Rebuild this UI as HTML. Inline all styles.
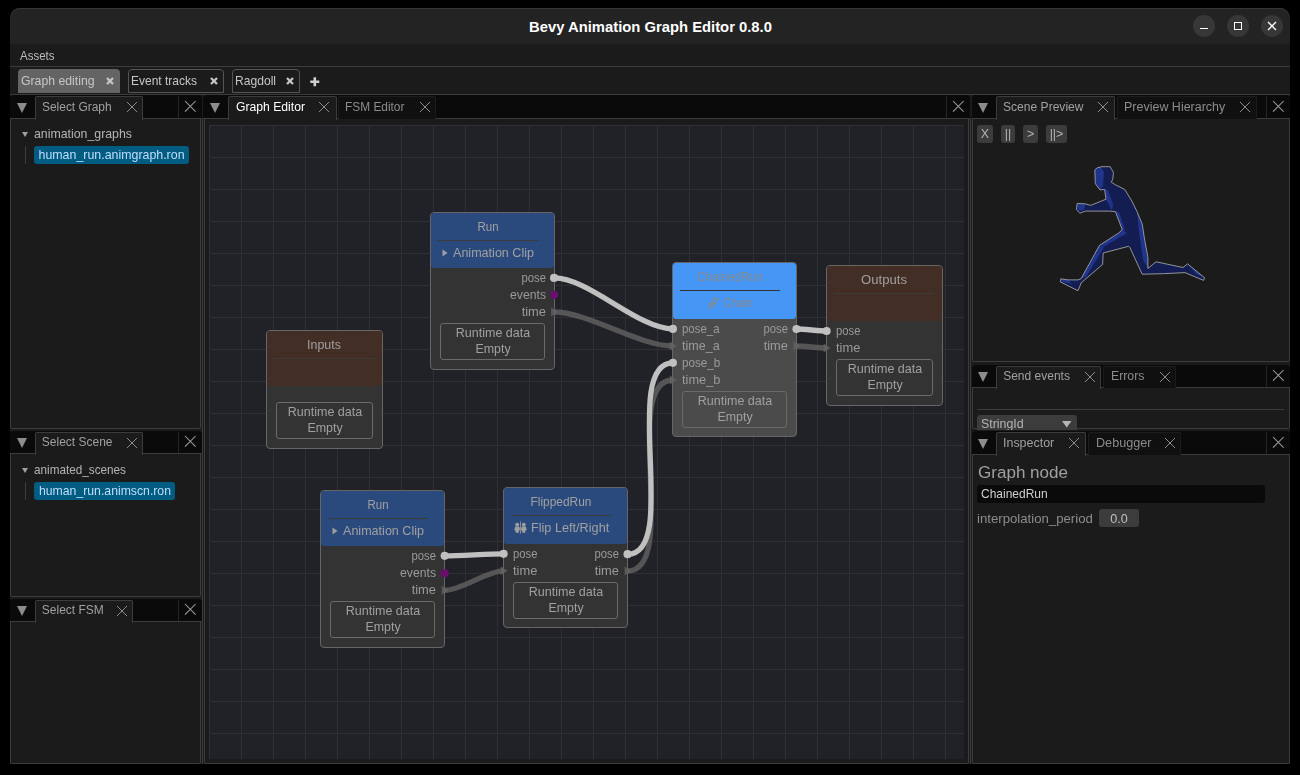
<!DOCTYPE html><html><head><meta charset="utf-8"><style>
html,body{margin:0;padding:0;width:1300px;height:775px;overflow:hidden;background:#000;}
.a{position:absolute;}
.t{position:absolute;font-family:"Liberation Sans", sans-serif;white-space:nowrap;}
svg{overflow:visible}
</style></head><body>
<div style="position:absolute;left:10px;top:8px;width:1280px;height:756px;background:#1b1b1b;border-radius:10px 10px 0 0;"></div>
<div style="position:absolute;left:10px;top:8px;width:1280px;height:36px;background:#232323;border-radius:10px 10px 0 0;box-shadow:inset 0 1px 0 #353535;"></div>

<div class="t" style="left:650.50px;top:20.07px;font-size:14.8px;line-height:14.8px;color:#ffffff;font-weight:bold;transform:translateX(-50%);">Bevy Animation Graph Editor 0.8.0</div>
<div id="root" style="position:absolute;left:0;top:0;width:1300px;height:775px;will-change:transform">
<div class="a" style="left:1193px;top:15px;width:22px;height:22px;border-radius:11px;background:#373737"></div>
<div class="a" style="left:1227px;top:15px;width:22px;height:22px;border-radius:11px;background:#373737"></div>
<div class="a" style="left:1261px;top:15px;width:22px;height:22px;border-radius:11px;background:#373737"></div>
<div class="a" style="left:1200px;top:27.8px;width:8px;height:1.1999999999999993px;background:#ffffff;"></div>
<div class="a" style="left:1234px;top:22px;width:6px;height:6px;border:1.2px solid #fff"></div>
<svg class="a" style="left:1267.0px;top:21.0px" width="10" height="10"><path d="M1 1L9 9M9 1L1 9" stroke="#ffffff" stroke-width="1.3"/></svg>
<div class="t" style="left:20.30px;top:49.50px;font-size:12.4px;line-height:12.4px;color:#bdbdbd;transform-origin:0 0;transform: scaleX(0.9273);">Assets</div>
<div class="a" style="left:10px;top:66px;width:1280px;height:1px;background:#3c3c3c;"></div>
<div class="a" style="left:18px;top:69px;width:102px;height:24px;background:#646464;border-radius:4px 4px 0 0"></div>
<div class="t" style="left:20.80px;top:75.00px;font-size:12.4px;line-height:12.4px;color:#c6c6c6;transform-origin:0 0;transform: scaleX(0.9882);">Graph editing</div>
<svg class="a" style="left:106.3px;top:77.4px" width="8" height="8"><path d="M1 1L7 7M7 1L1 7" stroke="#c6c6c6" stroke-width="2.3"/></svg>
<div class="a" style="left:128px;top:69px;width:94px;height:22px;background:#1b1b1b;border:1px solid #555555;border-radius:4px 4px 0 0"></div>
<div class="t" style="left:130.80px;top:75.00px;font-size:12.4px;line-height:12.4px;color:#c6c6c6;transform-origin:0 0;transform: scaleX(0.9679);">Event tracks</div>
<svg class="a" style="left:210.3px;top:77.4px" width="8" height="8"><path d="M1 1L7 7M7 1L1 7" stroke="#c6c6c6" stroke-width="2.3"/></svg>
<div class="a" style="left:232px;top:69px;width:66px;height:22px;background:#1b1b1b;border:1px solid #555555;border-radius:4px 4px 0 0"></div>
<div class="t" style="left:234.80px;top:75.00px;font-size:12.4px;line-height:12.4px;color:#c6c6c6;transform-origin:0 0;transform: scaleX(0.9758);">Ragdoll</div>
<svg class="a" style="left:286.3px;top:77.4px" width="8" height="8"><path d="M1 1L7 7M7 1L1 7" stroke="#c6c6c6" stroke-width="2.3"/></svg>
<svg class="a" style="left:309.7px;top:76.6px" width="10" height="10"><path d="M4.8 0.3V9.3M0.3 4.8H9.3" stroke="#d0d0d0" stroke-width="2.6"/></svg>
<div class="a" style="left:10px;top:94px;width:1280px;height:1px;background:#3c3c3c;"></div>
<div class="a" style="left:10px;top:95px;width:192px;height:24px;background:#0a0a0a;border-radius:4px 4px 0 0"></div>
<div class="a" style="left:10px;top:118px;width:192px;height:1px;background:#3c3c3c;"></div>
<svg class="a" style="left:17.0px;top:102.5px" width="10" height="10"><path d="M0 0L10 0L5.0 10Z" fill="#8c8c8c"/></svg>
<div class="a" style="left:35px;top:96px;width:106px;height:23px;background:#1b1b1b;border:1px solid #3c3c3c;border-bottom:none;border-radius:2px 2px 0 0"></div>
<div class="t" style="left:41.80px;top:100.64px;font-size:12px;line-height:12px;color:#a0a0a0;transform-origin:0 0;transform: scaleX(0.9941);">Select Graph</div>
<svg class="a" style="left:126.0px;top:101.0px" width="12" height="12"><path d="M1 1L11 11M11 1L1 11" stroke="#8c8c8c" stroke-width="1"/></svg>
<div class="a" style="left:178px;top:96px;width:1px;height:22px;background:#262626;"></div>
<svg class="a" style="left:183.7px;top:99.7px" width="12.6" height="12.6"><path d="M1 1L11.6 11.6M11.6 1L1 11.6" stroke="#a0a0a0" stroke-width="1.05"/></svg>
<div class="a" style="left:10px;top:119px;width:189px;height:309px;border:1px solid #3c3c3c;border-top:none;border-radius:0 0 2px 2px"></div>
<div class="a" style="left:10px;top:431px;width:192px;height:23px;background:#0a0a0a;border-radius:4px 4px 0 0"></div>
<div class="a" style="left:10px;top:453px;width:192px;height:1px;background:#3c3c3c;"></div>
<svg class="a" style="left:17.0px;top:438.0px" width="10" height="10"><path d="M0 0L10 0L5.0 10Z" fill="#8c8c8c"/></svg>
<div class="a" style="left:35px;top:432px;width:106px;height:22px;background:#1b1b1b;border:1px solid #3c3c3c;border-bottom:none;border-radius:2px 2px 0 0"></div>
<div class="t" style="left:41.80px;top:436.14px;font-size:12px;line-height:12px;color:#a0a0a0;">Select Scene</div>
<svg class="a" style="left:125.69999999999999px;top:436.5px" width="12" height="12"><path d="M1 1L11 11M11 1L1 11" stroke="#8c8c8c" stroke-width="1"/></svg>
<div class="a" style="left:178px;top:432px;width:1px;height:21px;background:#262626;"></div>
<svg class="a" style="left:183.7px;top:435.2px" width="12.6" height="12.6"><path d="M1 1L11.6 11.6M11.6 1L1 11.6" stroke="#a0a0a0" stroke-width="1.05"/></svg>
<div class="a" style="left:10px;top:454px;width:189px;height:142px;border:1px solid #3c3c3c;border-top:none;border-radius:0 0 2px 2px"></div>
<div class="a" style="left:10px;top:599px;width:192px;height:23px;background:#0a0a0a;border-radius:4px 4px 0 0"></div>
<div class="a" style="left:10px;top:621px;width:192px;height:1px;background:#3c3c3c;"></div>
<svg class="a" style="left:17.0px;top:606.0px" width="10" height="10"><path d="M0 0L10 0L5.0 10Z" fill="#8c8c8c"/></svg>
<div class="a" style="left:35px;top:600px;width:96px;height:22px;background:#1b1b1b;border:1px solid #3c3c3c;border-bottom:none;border-radius:2px 2px 0 0"></div>
<div class="t" style="left:41.80px;top:604.14px;font-size:12px;line-height:12px;color:#a0a0a0;">Select FSM</div>
<svg class="a" style="left:115.5px;top:604.5px" width="12" height="12"><path d="M1 1L11 11M11 1L1 11" stroke="#8c8c8c" stroke-width="1"/></svg>
<div class="a" style="left:178px;top:600px;width:1px;height:21px;background:#262626;"></div>
<svg class="a" style="left:183.7px;top:603.2px" width="12.6" height="12.6"><path d="M1 1L11.6 11.6M11.6 1L1 11.6" stroke="#a0a0a0" stroke-width="1.05"/></svg>
<div class="a" style="left:10px;top:622px;width:189px;height:141px;border:1px solid #3c3c3c;border-top:none;border-radius:0 0 2px 2px"></div>
<div class="a" style="left:202px;top:119px;width:1px;height:645px;background:#3c3c3c;"></div>
<div class="a" style="left:203px;top:95px;width:767px;height:24px;background:#0a0a0a;border-radius:4px 4px 0 0"></div>
<div class="a" style="left:203px;top:118px;width:767px;height:1px;background:#3c3c3c;"></div>
<svg class="a" style="left:210.0px;top:102.5px" width="10" height="10"><path d="M0 0L10 0L5.0 10Z" fill="#8c8c8c"/></svg>
<div class="a" style="left:228px;top:96px;width:107px;height:23px;background:#1b1b1b;border:1px solid #3c3c3c;border-bottom:none;border-radius:2px 2px 0 0"></div>
<div class="t" style="left:235.60px;top:100.64px;font-size:12px;line-height:12px;color:#ffffff;transform-origin:0 0;transform: scaleX(1.0145);">Graph Editor</div>
<svg class="a" style="left:318.4px;top:101.0px" width="12" height="12"><path d="M1 1L11 11M11 1L1 11" stroke="#8c8c8c" stroke-width="1"/></svg>
<div class="a" style="left:338px;top:96px;width:96px;height:22px;background:#101010;border:1px solid #1c1c1c;border-bottom:none;border-radius:2px 2px 0 0"></div>
<div class="t" style="left:345.40px;top:100.64px;font-size:12px;line-height:12px;color:#8c8c8c;transform-origin:0 0;transform: scaleX(0.9900);">FSM Editor</div>
<svg class="a" style="left:418.6px;top:101.0px" width="12" height="12"><path d="M1 1L11 11M11 1L1 11" stroke="#8c8c8c" stroke-width="1"/></svg>
<div class="a" style="left:946px;top:96px;width:1px;height:22px;background:#262626;"></div>
<svg class="a" style="left:951.7px;top:99.7px" width="12.6" height="12.6"><path d="M1 1L11.6 11.6M11.6 1L1 11.6" stroke="#a0a0a0" stroke-width="1.05"/></svg>
<div class="a" style="left:204px;top:119px;width:763px;height:644px;border:1px solid #3c3c3c;border-top:none;border-radius:0 0 2px 2px"></div>
<div class="a" style="left:970px;top:119px;width:1px;height:645px;background:#3c3c3c;"></div>
<div class="a" style="left:972px;top:95px;width:318px;height:24px;background:#0a0a0a;border-radius:4px 4px 0 0"></div>
<div class="a" style="left:972px;top:118px;width:318px;height:1px;background:#3c3c3c;"></div>
<svg class="a" style="left:978.0px;top:102.5px" width="10" height="10"><path d="M0 0L10 0L5.0 10Z" fill="#8c8c8c"/></svg>
<div class="a" style="left:996px;top:96px;width:117px;height:23px;background:#1b1b1b;border:1px solid #3c3c3c;border-bottom:none;border-radius:2px 2px 0 0"></div>
<div class="t" style="left:1003.00px;top:100.64px;font-size:12px;line-height:12px;color:#a0a0a0;transform-origin:0 0;transform: scaleX(1.0059);">Scene Preview</div>
<svg class="a" style="left:1097.2px;top:101.0px" width="12" height="12"><path d="M1 1L11 11M11 1L1 11" stroke="#8c8c8c" stroke-width="1"/></svg>
<div class="a" style="left:1117px;top:96px;width:138px;height:22px;background:#101010;border:1px solid #1c1c1c;border-bottom:none;border-radius:2px 2px 0 0"></div>
<div class="t" style="left:1124.30px;top:100.64px;font-size:12px;line-height:12px;color:#8c8c8c;transform-origin:0 0;transform: scaleX(1.0403);">Preview Hierarchy</div>
<svg class="a" style="left:1239.4px;top:101.0px" width="12" height="12"><path d="M1 1L11 11M11 1L1 11" stroke="#8c8c8c" stroke-width="1"/></svg>
<div class="a" style="left:1266px;top:96px;width:1px;height:22px;background:#262626;"></div>
<svg class="a" style="left:1271.7px;top:99.7px" width="12.6" height="12.6"><path d="M1 1L11.6 11.6M11.6 1L1 11.6" stroke="#a0a0a0" stroke-width="1.05"/></svg>
<div class="a" style="left:972px;top:119px;width:316px;height:242px;border:1px solid #3c3c3c;border-top:none;border-radius:0 0 2px 2px"></div>
<div class="a" style="left:972px;top:365px;width:318px;height:23px;background:#0a0a0a;border-radius:4px 4px 0 0"></div>
<div class="a" style="left:972px;top:387px;width:318px;height:1px;background:#3c3c3c;"></div>
<svg class="a" style="left:978.0px;top:372.0px" width="10" height="10"><path d="M0 0L10 0L5.0 10Z" fill="#8c8c8c"/></svg>
<div class="a" style="left:996px;top:366px;width:103px;height:22px;background:#1b1b1b;border:1px solid #3c3c3c;border-bottom:none;border-radius:2px 2px 0 0"></div>
<div class="t" style="left:1003.20px;top:370.14px;font-size:12px;line-height:12px;color:#a0a0a0;">Send events</div>
<svg class="a" style="left:1084.0px;top:370.5px" width="12" height="12"><path d="M1 1L11 11M11 1L1 11" stroke="#8c8c8c" stroke-width="1"/></svg>
<div class="a" style="left:1103px;top:366px;width:71px;height:21px;background:#101010;border:1px solid #1c1c1c;border-bottom:none;border-radius:2px 2px 0 0"></div>
<div class="t" style="left:1110.50px;top:370.14px;font-size:12px;line-height:12px;color:#8c8c8c;transform-origin:0 0;transform: scaleX(1.0223);">Errors</div>
<svg class="a" style="left:1158.8px;top:370.5px" width="12" height="12"><path d="M1 1L11 11M11 1L1 11" stroke="#8c8c8c" stroke-width="1"/></svg>
<div class="a" style="left:1266px;top:366px;width:1px;height:21px;background:#262626;"></div>
<svg class="a" style="left:1271.7px;top:369.2px" width="12.6" height="12.6"><path d="M1 1L11.6 11.6M11.6 1L1 11.6" stroke="#a0a0a0" stroke-width="1.05"/></svg>
<div class="a" style="left:972px;top:388px;width:316px;height:40px;border:1px solid #3c3c3c;border-top:none;border-radius:0 0 2px 2px"></div>
<div class="a" style="left:972px;top:431px;width:318px;height:24px;background:#0a0a0a;border-radius:4px 4px 0 0"></div>
<div class="a" style="left:972px;top:454px;width:318px;height:1px;background:#3c3c3c;"></div>
<svg class="a" style="left:978.0px;top:438.5px" width="10" height="10"><path d="M0 0L10 0L5.0 10Z" fill="#8c8c8c"/></svg>
<div class="a" style="left:996px;top:432px;width:88px;height:23px;background:#1b1b1b;border:1px solid #3c3c3c;border-bottom:none;border-radius:2px 2px 0 0"></div>
<div class="t" style="left:1003.40px;top:436.64px;font-size:12px;line-height:12px;color:#a0a0a0;transform-origin:0 0;transform: scaleX(1.0376);">Inspector</div>
<svg class="a" style="left:1068.3px;top:437.0px" width="12" height="12"><path d="M1 1L11 11M11 1L1 11" stroke="#8c8c8c" stroke-width="1"/></svg>
<div class="a" style="left:1088px;top:432px;width:91px;height:22px;background:#101010;border:1px solid #1c1c1c;border-bottom:none;border-radius:2px 2px 0 0"></div>
<div class="t" style="left:1095.50px;top:436.64px;font-size:12px;line-height:12px;color:#8c8c8c;transform-origin:0 0;transform: scaleX(1.0512);">Debugger</div>
<svg class="a" style="left:1164.0px;top:437.0px" width="12" height="12"><path d="M1 1L11 11M11 1L1 11" stroke="#8c8c8c" stroke-width="1"/></svg>
<div class="a" style="left:1266px;top:432px;width:1px;height:22px;background:#262626;"></div>
<svg class="a" style="left:1271.7px;top:435.7px" width="12.6" height="12.6"><path d="M1 1L11.6 11.6M11.6 1L1 11.6" stroke="#a0a0a0" stroke-width="1.05"/></svg>
<div class="a" style="left:972px;top:455px;width:316px;height:308px;border:1px solid #3c3c3c;border-top:none;border-radius:0 0 2px 2px"></div>
<svg class="a" style="left:22.0px;top:132.3px" width="6" height="5"><path d="M0 0L6 0L3.0 5Z" fill="#a0a0a0"/></svg>
<div class="t" style="left:34.00px;top:127.80px;font-size:12.4px;line-height:12.4px;color:#b4b4b4;transform-origin:0 0;transform: scaleX(0.9949);">animation_graphs</div>
<div class="a" style="left:25px;top:146.3px;width:1px;height:18.0px;background:#3c3c3c;"></div>
<div class="a" style="left:34px;top:146.3px;width:155px;height:18px;background:#005c80;border-radius:3px"></div>
<div class="t" style="left:38.50px;top:148.80px;font-size:12.4px;line-height:12.4px;color:#c0deff;">human_run.animgraph.ron</div>
<svg class="a" style="left:22.0px;top:468.0px" width="6" height="5"><path d="M0 0L6 0L3.0 5Z" fill="#a0a0a0"/></svg>
<div class="t" style="left:34.00px;top:463.50px;font-size:12.4px;line-height:12.4px;color:#b4b4b4;transform-origin:0 0;transform: scaleX(0.9471);">animated_scenes</div>
<div class="a" style="left:25px;top:482px;width:1px;height:18px;background:#3c3c3c;"></div>
<div class="a" style="left:34px;top:482px;width:141px;height:18px;background:#005c80;border-radius:3px"></div>
<div class="t" style="left:38.50px;top:484.50px;font-size:12.4px;line-height:12.4px;color:#c0deff;transform-origin:0 0;transform: scaleX(0.9878);">human_run.animscn.ron</div>
<svg class="a" style="left:209px;top:125px;background:#212227" width="755" height="634"><rect x="0" y="0" width="1" height="634" fill="#2f3035"/><rect x="32" y="0" width="1" height="634" fill="#2f3035"/><rect x="64" y="0" width="1" height="634" fill="#2f3035"/><rect x="96" y="0" width="1" height="634" fill="#2f3035"/><rect x="128" y="0" width="1" height="634" fill="#2f3035"/><rect x="160" y="0" width="1" height="634" fill="#2f3035"/><rect x="192" y="0" width="1" height="634" fill="#2f3035"/><rect x="224" y="0" width="1" height="634" fill="#2f3035"/><rect x="256" y="0" width="1" height="634" fill="#2f3035"/><rect x="288" y="0" width="1" height="634" fill="#2f3035"/><rect x="320" y="0" width="1" height="634" fill="#2f3035"/><rect x="352" y="0" width="1" height="634" fill="#2f3035"/><rect x="384" y="0" width="1" height="634" fill="#2f3035"/><rect x="416" y="0" width="1" height="634" fill="#2f3035"/><rect x="448" y="0" width="1" height="634" fill="#2f3035"/><rect x="480" y="0" width="1" height="634" fill="#2f3035"/><rect x="512" y="0" width="1" height="634" fill="#2f3035"/><rect x="544" y="0" width="1" height="634" fill="#2f3035"/><rect x="576" y="0" width="1" height="634" fill="#2f3035"/><rect x="608" y="0" width="1" height="634" fill="#2f3035"/><rect x="640" y="0" width="1" height="634" fill="#2f3035"/><rect x="672" y="0" width="1" height="634" fill="#2f3035"/><rect x="704" y="0" width="1" height="634" fill="#2f3035"/><rect x="736" y="0" width="1" height="634" fill="#2f3035"/><rect x="0" y="0" width="755" height="1" fill="#2f3035"/><rect x="0" y="32" width="755" height="1" fill="#2f3035"/><rect x="0" y="64" width="755" height="1" fill="#2f3035"/><rect x="0" y="96" width="755" height="1" fill="#2f3035"/><rect x="0" y="128" width="755" height="1" fill="#2f3035"/><rect x="0" y="160" width="755" height="1" fill="#2f3035"/><rect x="0" y="192" width="755" height="1" fill="#2f3035"/><rect x="0" y="224" width="755" height="1" fill="#2f3035"/><rect x="0" y="256" width="755" height="1" fill="#2f3035"/><rect x="0" y="288" width="755" height="1" fill="#2f3035"/><rect x="0" y="320" width="755" height="1" fill="#2f3035"/><rect x="0" y="352" width="755" height="1" fill="#2f3035"/><rect x="0" y="384" width="755" height="1" fill="#2f3035"/><rect x="0" y="416" width="755" height="1" fill="#2f3035"/><rect x="0" y="448" width="755" height="1" fill="#2f3035"/><rect x="0" y="480" width="755" height="1" fill="#2f3035"/><rect x="0" y="512" width="755" height="1" fill="#2f3035"/><rect x="0" y="544" width="755" height="1" fill="#2f3035"/><rect x="0" y="576" width="755" height="1" fill="#2f3035"/><rect x="0" y="608" width="755" height="1" fill="#2f3035"/></svg>
<div class="a" style="left:430px;top:212px;width:123px;height:156px;background:#333333;border:1px solid #666666;border-radius:4px"></div>
<div class="a" style="left:431px;top:213px;width:123px;height:55px;background:#2a4a7d;border-radius:3px"></div>
<div class="t" style="left:488.40px;top:220.26px;font-size:13.4px;line-height:13.4px;color:#a0a0a0;transform:translateX(-50%) scaleX(0.8585);">Run</div>
<div class="a" style="left:438px;top:240px;width:100px;height:1px;background:#3c3c3c"></div>
<div class="t" style="left:453.40px;top:245.76px;font-size:13.4px;line-height:13.4px;color:#a0a0a0;transform-origin:0 0;transform: scaleX(0.9381);">Animation Clip</div>
<svg class="a" style="left:442.4px;top:248.8px" width="6" height="8"><path d="M0.5 0.5L5.5 4L0.5 7.5Z" fill="#a0a0a0"/></svg>
<div class="t" style="left:546.00px;top:271.16px;font-size:13.4px;line-height:13.4px;color:#9a9a9a;transform-origin:100% 0;transform:translateX(-100%) scaleX(0.8396);">pose</div>
<div class="t" style="left:546.00px;top:288.16px;font-size:13.4px;line-height:13.4px;color:#9a9a9a;transform-origin:100% 0;transform:translateX(-100%) scaleX(0.9118);">events</div>
<div class="t" style="left:546.00px;top:305.16px;font-size:13.4px;line-height:13.4px;color:#9a9a9a;transform-origin:100% 0;transform:translateX(-100%) scaleX(0.9606);">time</div>
<div class="a" style="left:440px;top:323px;width:103px;height:35px;border:1px solid #6a6a6a;border-radius:3px"></div>
<div class="t" style="left:492.50px;top:325.66px;font-size:13.4px;line-height:13.4px;color:#a0a0a0;transform:translateX(-50%) scaleX(0.9351);">Runtime data</div>
<div class="t" style="left:492.50px;top:342.16px;font-size:13.4px;line-height:13.4px;color:#a0a0a0;transform:translateX(-50%) scaleX(0.9271);">Empty</div>
<div class="a" style="left:320px;top:490px;width:123px;height:156px;background:#333333;border:1px solid #666666;border-radius:4px"></div>
<div class="a" style="left:321px;top:491px;width:123px;height:55px;background:#2a4a7d;border-radius:3px"></div>
<div class="t" style="left:378.40px;top:498.26px;font-size:13.4px;line-height:13.4px;color:#a0a0a0;transform:translateX(-50%) scaleX(0.8585);">Run</div>
<div class="a" style="left:328px;top:518px;width:100px;height:1px;background:#3c3c3c"></div>
<div class="t" style="left:343.40px;top:523.76px;font-size:13.4px;line-height:13.4px;color:#a0a0a0;transform-origin:0 0;transform: scaleX(0.9381);">Animation Clip</div>
<svg class="a" style="left:332.4px;top:526.8px" width="6" height="8"><path d="M0.5 0.5L5.5 4L0.5 7.5Z" fill="#a0a0a0"/></svg>
<div class="t" style="left:436.00px;top:549.16px;font-size:13.4px;line-height:13.4px;color:#9a9a9a;transform-origin:100% 0;transform:translateX(-100%) scaleX(0.8396);">pose</div>
<div class="t" style="left:436.00px;top:566.16px;font-size:13.4px;line-height:13.4px;color:#9a9a9a;transform-origin:100% 0;transform:translateX(-100%) scaleX(0.9118);">events</div>
<div class="t" style="left:436.00px;top:583.16px;font-size:13.4px;line-height:13.4px;color:#9a9a9a;transform-origin:100% 0;transform:translateX(-100%) scaleX(0.9606);">time</div>
<div class="a" style="left:330px;top:601px;width:103px;height:35px;border:1px solid #6a6a6a;border-radius:3px"></div>
<div class="t" style="left:382.50px;top:603.66px;font-size:13.4px;line-height:13.4px;color:#a0a0a0;transform:translateX(-50%) scaleX(0.9351);">Runtime data</div>
<div class="t" style="left:382.50px;top:620.16px;font-size:13.4px;line-height:13.4px;color:#a0a0a0;transform:translateX(-50%) scaleX(0.9271);">Empty</div>
<div class="a" style="left:503px;top:487px;width:123px;height:139px;background:#333333;border:1px solid #666666;border-radius:4px"></div>
<div class="a" style="left:504px;top:488px;width:123px;height:56px;background:#2a4a7d;border-radius:3px"></div>
<div class="t" style="left:561.40px;top:495.26px;font-size:13.4px;line-height:13.4px;color:#a0a0a0;transform:translateX(-50%) scaleX(0.8891);">FlippedRun</div>
<div class="a" style="left:511px;top:515px;width:100px;height:1px;background:#3c3c3c"></div>
<div class="t" style="left:531.05px;top:520.76px;font-size:13.4px;line-height:13.4px;color:#a0a0a0;transform-origin:0 0;transform: scaleX(0.9466);">Flip Left/Right</div>
<svg class="a" style="left:513.55px;top:522.3px" width="13" height="12"><circle cx="3.2" cy="2.6" r="1.9" fill="#a0a0a0"/><circle cx="9.8" cy="2.6" r="1.9" fill="#a0a0a0"/><path d="M0.2 8.2L1.2 4.6L5.2 4.6L6.2 8.2L5 8.2L4.6 10.8L1.8 10.8L1.4 8.2Z" fill="#a0a0a0"/><path d="M6.8 8.2L7.8 4.6L11.8 4.6L12.8 8.2L11.6 8.2L11.2 10.8L8.4 10.8L8 8.2Z" fill="#a0a0a0"/><rect x="6.1" y="-0.5" width="0.8" height="12" fill="#a0a0a0"/></svg>
<div class="t" style="left:512.50px;top:546.66px;font-size:13.4px;line-height:13.4px;color:#9a9a9a;transform-origin:0 0;transform: scaleX(0.8396);">pose</div>
<div class="t" style="left:512.50px;top:563.66px;font-size:13.4px;line-height:13.4px;color:#9a9a9a;transform-origin:0 0;transform: scaleX(0.9606);">time</div>
<div class="t" style="left:619.00px;top:546.66px;font-size:13.4px;line-height:13.4px;color:#9a9a9a;transform-origin:100% 0;transform:translateX(-100%) scaleX(0.8396);">pose</div>
<div class="t" style="left:619.00px;top:563.66px;font-size:13.4px;line-height:13.4px;color:#9a9a9a;transform-origin:100% 0;transform:translateX(-100%) scaleX(0.9606);">time</div>
<div class="a" style="left:513px;top:582px;width:103px;height:35px;border:1px solid #6a6a6a;border-radius:3px"></div>
<div class="t" style="left:565.50px;top:584.66px;font-size:13.4px;line-height:13.4px;color:#a0a0a0;transform:translateX(-50%) scaleX(0.9351);">Runtime data</div>
<div class="t" style="left:565.50px;top:601.16px;font-size:13.4px;line-height:13.4px;color:#a0a0a0;transform:translateX(-50%) scaleX(0.9271);">Empty</div>
<div class="a" style="left:672px;top:262px;width:123px;height:173px;background:#4b4b4b;border:1px solid #666666;border-radius:4px"></div>
<div class="a" style="left:673px;top:263px;width:123px;height:56px;background:#4696f5;border-radius:3px"></div>
<div class="t" style="left:730.40px;top:270.26px;font-size:13.4px;line-height:13.4px;color:#8a8a8a;transform:translateX(-50%) scaleX(0.8874);">ChainedRun</div>
<div class="a" style="left:680px;top:290px;width:100px;height:1px;background:#333333"></div>
<div class="t" style="left:723.10px;top:295.76px;font-size:13.4px;line-height:13.4px;color:#8a8a8a;transform-origin:0 0;transform: scaleX(0.8457);">Chain</div>
<svg class="a" style="left:708.1px;top:296.8px" width="11" height="12"><path d="M1.2 10.8L5.2 6.2M4 4.2C5 2.2 7.5 0.8 9.6 1.2C10.2 2.6 9 5 6.8 6.6" stroke="#8a8a8a" stroke-width="1.3" fill="none" stroke-linecap="round"/><path d="M0.8 7.2C2.2 5.8 4.2 5.6 5.6 6.6M3.2 11.2C3.6 9.6 4.6 8.2 5.6 7.4" stroke="#8a8a8a" stroke-width="1.3" fill="none" stroke-linecap="round"/></svg>
<div class="t" style="left:681.50px;top:321.66px;font-size:13.4px;line-height:13.4px;color:#9a9a9a;transform-origin:0 0;transform: scaleX(0.8552);">pose_a</div>
<div class="t" style="left:681.50px;top:338.66px;font-size:13.4px;line-height:13.4px;color:#9a9a9a;transform-origin:0 0;transform: scaleX(0.9353);">time_a</div>
<div class="t" style="left:681.50px;top:355.66px;font-size:13.4px;line-height:13.4px;color:#9a9a9a;transform-origin:0 0;transform: scaleX(0.8733);">pose_b</div>
<div class="t" style="left:681.50px;top:372.66px;font-size:13.4px;line-height:13.4px;color:#9a9a9a;transform-origin:0 0;transform: scaleX(0.9551);">time_b</div>
<div class="t" style="left:788.00px;top:321.66px;font-size:13.4px;line-height:13.4px;color:#9a9a9a;transform-origin:100% 0;transform:translateX(-100%) scaleX(0.8396);">pose</div>
<div class="t" style="left:788.00px;top:338.66px;font-size:13.4px;line-height:13.4px;color:#9a9a9a;transform-origin:100% 0;transform:translateX(-100%) scaleX(0.9606);">time</div>
<div class="a" style="left:682px;top:391px;width:103px;height:35px;border:1px solid #6a6a6a;border-radius:3px"></div>
<div class="t" style="left:734.50px;top:393.66px;font-size:13.4px;line-height:13.4px;color:#a0a0a0;transform:translateX(-50%) scaleX(0.9351);">Runtime data</div>
<div class="t" style="left:734.50px;top:410.16px;font-size:13.4px;line-height:13.4px;color:#a0a0a0;transform:translateX(-50%) scaleX(0.9271);">Empty</div>
<div class="a" style="left:826px;top:265px;width:115px;height:139px;background:#333333;border:1px solid #666666;border-radius:4px"></div>
<div class="a" style="left:827px;top:266px;width:115px;height:55px;background:#432e25;border-radius:3px"></div>
<div class="t" style="left:884.40px;top:273.26px;font-size:13.4px;line-height:13.4px;color:#a0a0a0;transform:translateX(-50%) scaleX(0.9782);">Outputs</div>
<div class="a" style="left:834px;top:293px;width:100px;height:1px;background:#3c3c3c"></div>
<div class="t" style="left:835.50px;top:324.16px;font-size:13.4px;line-height:13.4px;color:#9a9a9a;transform-origin:0 0;transform: scaleX(0.8396);">pose</div>
<div class="t" style="left:835.50px;top:341.16px;font-size:13.4px;line-height:13.4px;color:#9a9a9a;transform-origin:0 0;transform: scaleX(0.9606);">time</div>
<div class="a" style="left:836px;top:359px;width:95px;height:35px;border:1px solid #6a6a6a;border-radius:3px"></div>
<div class="t" style="left:884.50px;top:361.66px;font-size:13.4px;line-height:13.4px;color:#a0a0a0;transform:translateX(-50%) scaleX(0.9351);">Runtime data</div>
<div class="t" style="left:884.50px;top:378.16px;font-size:13.4px;line-height:13.4px;color:#a0a0a0;transform:translateX(-50%) scaleX(0.9271);">Empty</div>
<div class="a" style="left:266px;top:330px;width:115px;height:117px;background:#333333;border:1px solid #666666;border-radius:4px"></div>
<div class="a" style="left:267px;top:331px;width:115px;height:54.5px;background:#432e25;border-radius:3px"></div>
<div class="t" style="left:324.40px;top:338.26px;font-size:13.4px;line-height:13.4px;color:#a0a0a0;transform:translateX(-50%) scaleX(0.9260);">Inputs</div>
<div class="a" style="left:274px;top:358px;width:100px;height:1px;background:#3c3c3c"></div>
<div class="a" style="left:276px;top:402px;width:95px;height:35px;border:1px solid #6a6a6a;border-radius:3px"></div>
<div class="t" style="left:324.50px;top:404.66px;font-size:13.4px;line-height:13.4px;color:#a0a0a0;transform:translateX(-50%) scaleX(0.9351);">Runtime data</div>
<div class="t" style="left:324.50px;top:421.16px;font-size:13.4px;line-height:13.4px;color:#a0a0a0;transform:translateX(-50%) scaleX(0.9271);">Empty</div>
<svg class="a" style="left:0;top:0" width="1300" height="775"><path d="M554.1 312C587.46 312 639.54 346 672.9 346" stroke="rgba(100,100,100,0.78)" stroke-width="5.3" fill="none"/><path d="M627.6 571C680.60 571 619.90 380 672.9 380" stroke="rgba(100,100,100,0.78)" stroke-width="5.3" fill="none"/><path d="M796.5 346C804.64 346 818.46 348 826.6 348" stroke="rgba(100,100,100,0.78)" stroke-width="5.3" fill="none"/><path d="M444.7 590.3C461.45 590.3 486.85 570.8 503.6 570.8" stroke="rgba(100,100,100,0.78)" stroke-width="5.3" fill="none"/><path d="M554.1 277.9C589.01 277.9 637.99 328.9 672.9 328.9" stroke="#c0c0c0" stroke-width="5.3" fill="none"/><path d="M627.6 554.2C680.71 554.2 619.79 362.8 672.9 362.8" stroke="#c0c0c0" stroke-width="5.3" fill="none"/><path d="M796.5 329C804.64 329 818.46 331 826.6 331" stroke="#c0c0c0" stroke-width="5.3" fill="none"/><path d="M444.7 555.8C460.61 555.8 487.69 553.8 503.6 553.8" stroke="#c0c0c0" stroke-width="5.3" fill="none"/><circle cx="554.1" cy="277.9" r="4.1" fill="#c0c0c0"/><circle cx="672.9" cy="328.9" r="4.1" fill="#c0c0c0"/><circle cx="627.6" cy="554.2" r="4.1" fill="#c0c0c0"/><circle cx="672.9" cy="362.8" r="4.1" fill="#c0c0c0"/><circle cx="796.5" cy="329" r="4.1" fill="#c0c0c0"/><circle cx="826.6" cy="331" r="4.1" fill="#c0c0c0"/><circle cx="444.7" cy="555.8" r="4.1" fill="#c0c0c0"/><circle cx="503.6" cy="553.8" r="4.1" fill="#c0c0c0"/><circle cx="444.7" cy="573.3" r="4.1" fill="#6a0f6e"/><circle cx="554.1" cy="294.8" r="4.1" fill="#6a0f6e"/><path d="M551.1 307.5L558.1 312L551.1 316.5Z" fill="rgba(100,100,100,0.78)"/><path d="M669.9 341.5L676.9 346L669.9 350.5Z" fill="rgba(100,100,100,0.78)"/><path d="M624.6 566.5L631.6 571L624.6 575.5Z" fill="rgba(100,100,100,0.78)"/><path d="M669.9 375.5L676.9 380L669.9 384.5Z" fill="rgba(100,100,100,0.78)"/><path d="M793.5 341.5L800.5 346L793.5 350.5Z" fill="rgba(100,100,100,0.78)"/><path d="M823.6 343.5L830.6 348L823.6 352.5Z" fill="rgba(100,100,100,0.78)"/><path d="M441.7 585.8L448.7 590.3L441.7 594.8Z" fill="rgba(100,100,100,0.78)"/><path d="M500.6 566.3L507.6 570.8L500.6 575.3Z" fill="rgba(100,100,100,0.78)"/></svg>
<div class="a" style="left:977px;top:125px;width:16px;height:18px;background:#3c3c3c;border-radius:3px"></div><div class="t" style="left:985.00px;top:128.00px;font-size:12.4px;line-height:12.4px;color:#b4b4b4;transform:translateX(-50%);">X</div>
<div class="a" style="left:1001px;top:125px;width:14px;height:18px;background:#3c3c3c;border-radius:3px"></div><div class="t" style="left:1008.00px;top:128.00px;font-size:12.4px;line-height:12.4px;color:#b4b4b4;transform:translateX(-50%);">||</div>
<div class="a" style="left:1023px;top:125px;width:15px;height:18px;background:#3c3c3c;border-radius:3px"></div><div class="t" style="left:1030.50px;top:128.00px;font-size:12.4px;line-height:12.4px;color:#b4b4b4;transform:translateX(-50%);">&gt;</div>
<div class="a" style="left:1046px;top:125px;width:21px;height:18px;background:#3c3c3c;border-radius:3px"></div><div class="t" style="left:1056.50px;top:128.00px;font-size:12.4px;line-height:12.4px;color:#b4b4b4;transform:translateX(-50%);">||&gt;</div>
<svg class="a" style="left:0;top:0" width="1300" height="775"><defs><linearGradient id="rg" x1="0" y1="0" x2="1" y2="1"><stop offset="0" stop-color="#2238a0"/><stop offset="1" stop-color="#16205e"/></linearGradient></defs><clipPath id="rc"><polygon points="1097.4,167.7 1102,166.7 1110.2,166.7 1113.4,172.4 1112.8,179.1 1111.3,182.2 1115.4,184.8 1124.7,189.4 1132,201.3 1137,211.6 1142.2,224 1144.8,240.6 1147.9,257.2 1147.9,268.5 1156.1,261.8 1183,267.5 1187.6,263.9 1204.6,277.8 1203.6,280.4 1185,272.6 1163.3,273.7 1142.2,274.2 1129.8,247.3 1128.5,246.3 1103.2,253 1102.6,264.4 1081,283 1080.4,285 1077.9,290.7 1060.3,281.9 1060.8,278.8 1068,279.9 1077.9,279.9 1081,278.8 1099.5,245.3 1118.1,233.4 1122.3,229.8 1115.4,211.6 1109.2,211.1 1085.5,211.1 1079.8,213.2 1076.4,209.5 1077.2,203.4 1085.5,203.9 1090.6,205.4 1106,199.2 1104.6,189.4 1100,190 1095.3,183.7 1094.8,169.8"/></clipPath><polygon points="1097.4,167.7 1102,166.7 1110.2,166.7 1113.4,172.4 1112.8,179.1 1111.3,182.2 1115.4,184.8 1124.7,189.4 1132,201.3 1137,211.6 1142.2,224 1144.8,240.6 1147.9,257.2 1147.9,268.5 1156.1,261.8 1183,267.5 1187.6,263.9 1204.6,277.8 1203.6,280.4 1185,272.6 1163.3,273.7 1142.2,274.2 1129.8,247.3 1128.5,246.3 1103.2,253 1102.6,264.4 1081,283 1080.4,285 1077.9,290.7 1060.3,281.9 1060.8,278.8 1068,279.9 1077.9,279.9 1081,278.8 1099.5,245.3 1118.1,233.4 1122.3,229.8 1115.4,211.6 1109.2,211.1 1085.5,211.1 1079.8,213.2 1076.4,209.5 1077.2,203.4 1085.5,203.9 1090.6,205.4 1106,199.2 1104.6,189.4 1100,190 1095.3,183.7 1094.8,169.8" fill="#141d52"/><polygon points="1094.8,169.8 1097.4,167.7 1101,167 1104,172 1103,186 1100,190 1095.3,183.7" fill="#2844b4" opacity="0.6" clip-path="url(#rc)"/><polygon points="1104.6,189.4 1108,190 1113,204 1112,211 1106,199.2" fill="#2844b4" opacity="0.6" clip-path="url(#rc)"/><polygon points="1115.4,211.6 1119,212 1125,230 1122.3,229.8" fill="#2844b4" opacity="0.6" clip-path="url(#rc)"/><polygon points="1118.1,233.4 1122.3,229.8 1127,233 1105,246 1099.5,245.3" fill="#2844b4" opacity="0.6" clip-path="url(#rc)"/><polygon points="1099.5,245.3 1104,247 1086,277 1081,278.8" fill="#2844b4" opacity="0.6" clip-path="url(#rc)"/><polygon points="1137,211.6 1142.2,224 1144.8,240.6 1147.9,257.2 1147.9,268.5 1143,260 1139,232" fill="#2844b4" opacity="0.6" clip-path="url(#rc)"/><polygon points="1060.8,278.8 1068,279.9 1072,284 1062,282" fill="#2844b4" opacity="0.6" clip-path="url(#rc)"/><polygon points="1187.6,263.9 1204.6,277.8 1196,274" fill="#2844b4" opacity="0.6" clip-path="url(#rc)"/><polygon points="1077.2,203.4 1085.5,203.9 1084,210 1078,211" fill="#2844b4" opacity="0.6" clip-path="url(#rc)"/><polygon points="1097.4,167.7 1102,166.7 1110.2,166.7 1113.4,172.4 1112.8,179.1 1111.3,182.2 1115.4,184.8 1124.7,189.4 1132,201.3 1137,211.6 1142.2,224 1144.8,240.6 1147.9,257.2 1147.9,268.5 1156.1,261.8 1183,267.5 1187.6,263.9 1204.6,277.8 1203.6,280.4 1185,272.6 1163.3,273.7 1142.2,274.2 1129.8,247.3 1128.5,246.3 1103.2,253 1102.6,264.4 1081,283 1080.4,285 1077.9,290.7 1060.3,281.9 1060.8,278.8 1068,279.9 1077.9,279.9 1081,278.8 1099.5,245.3 1118.1,233.4 1122.3,229.8 1115.4,211.6 1109.2,211.1 1085.5,211.1 1079.8,213.2 1076.4,209.5 1077.2,203.4 1085.5,203.9 1090.6,205.4 1106,199.2 1104.6,189.4 1100,190 1095.3,183.7 1094.8,169.8" fill="none" stroke="#a8a8a8" stroke-width="1" stroke-opacity="0.85"/></svg>
<div class="a" style="left:977px;top:409px;width:307px;height:1px;background:#3c3c3c"></div>
<div class="a" style="left:972px;top:388px;width:318px;height:42px;overflow:hidden"><div class="a" style="left:5px;top:27px;width:100px;height:18px;background:#3c3c3c;border-radius:3px"></div><div class="t" style="left:9.00px;top:30.00px;font-size:12.4px;line-height:12.4px;color:#b4b4b4;">StringId</div><svg class="a" style="left:89.5px;top:33px" width="10" height="7"><path d="M0 0H9.5L4.75 6.5Z" fill="#b4b4b4"/></svg></div>
<div class="t" style="left:977.50px;top:464.07px;font-size:17.4px;line-height:17.4px;color:#a0a0a0;transform-origin:0 0;transform: scaleX(0.9798);">Graph node</div>
<div class="a" style="left:977px;top:485px;width:288px;height:18px;background:#0a0a0a;border-radius:3px"></div>
<div class="t" style="left:981.00px;top:487.76px;font-size:12.8px;line-height:12.8px;color:#d0d0d0;transform-origin:0 0;transform: scaleX(0.9370);">ChainedRun</div>
<div class="t" style="left:977.00px;top:511.83px;font-size:13.2px;line-height:13.2px;color:#8c8c8c;">interpolation_period</div>
<div class="a" style="left:1099px;top:509px;width:40px;height:18px;background:#3c3c3c;border-radius:3px"></div>
<div class="t" style="left:1119.00px;top:512.00px;font-size:13px;line-height:13px;color:#c0c0c0;transform:translateX(-50%) scaleX(0.9680);">0.0</div>
</div></body></html>
